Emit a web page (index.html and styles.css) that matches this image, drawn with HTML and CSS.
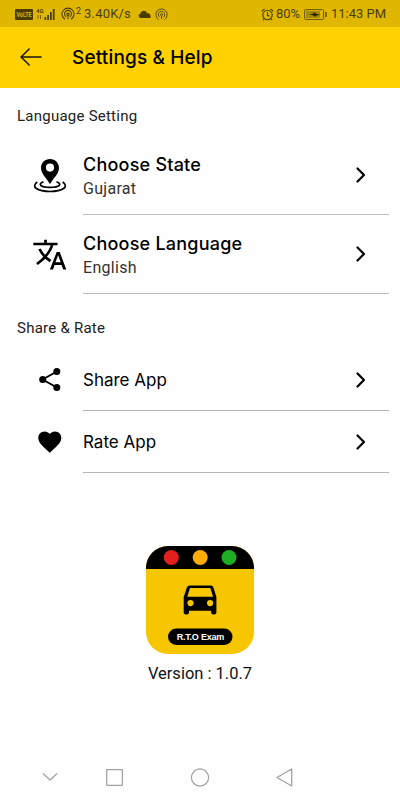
FILE: index.html
```html
<!DOCTYPE html>
<html lang="en">
<head>
<meta charset="utf-8">
<title>Settings &amp; Help</title>
<link rel="stylesheet" href="styles.css">
</head>
<body>
<div class="screen">
  <div class="status">
    <svg class="volte" width="18" height="15" viewBox="0 -2 18 15"><rect width="18" height="11" rx="1" fill="#4b3d00"/><text x="1.500" y="8.200" font-size="7" font-weight="700" fill="#dfb700" textLength="15" lengthAdjust="spacingAndGlyphs">VoLTE</text></svg>
    <svg class="signal" width="20" height="14" viewBox="0 0 20 14"><g fill="#4b3d00"><path d="M8.500 10h1.700v3H8.500zM11.200 8h1.700v5h-1.700zM14 5h1.700v8H14zM16.800 2h1.800v11h-1.800z"/><path d="M2 8v4M4.500 8v4" stroke="#4b3d00" stroke-width=".7"/></g><text x="0" y="5.500" font-size="6" font-weight="700" fill="#4b3d00">4G</text></svg>
    <svg class="hotspot" width="15" height="14" viewBox="0 0 15 14" fill="none" stroke="#4b3d00" stroke-width="1.100"><path d="M4 12.300a6 6 0 1 1 6 0M5 9.700a3.500 3.500 0 1 1 4 0"/><circle cx="7" cy="7.200" r="1.200"/><path d="M7 8v4"/></svg>
    <span class="sup">2</span>
    <span class="speed">3.40K/s</span>
    <svg class="cloud" width="13" height="8" viewBox="0 0 13 8"><path d="M2.500 8a2.300 2.300 0 0 1 0-4.500C3.500.2 7.500-.5 9 3.200 12 2.800 13 5 12.500 8z" fill="#4b3d00"/></svg>
    <svg class="cast" width="13" height="13" viewBox="0 0 13 13" fill="none" stroke="#4b3d00" stroke-width=".9"><path d="M3.500 11.500a5.700 5.700 0 1 1 6 0M4.600 9.100a3.200 3.200 0 1 1 3.800 0"/><circle cx="6.500" cy="6.600" r="1"/><path d="M6.500 8v3"/></svg>
    <svg class="alarm" width="13" height="13" viewBox="0 0 13 13" fill="none" stroke="#4b3d00" stroke-width="1.100"><circle cx="6.500" cy="7" r="4.700"/><path d="M6.500 4v3.300l2 1M.7 3.300 3.500.9M12.300 3.300 9.500.9M3 10.800l-1 1.400M10 10.800l1 1.400"/></svg>
    <span class="percent">80%</span>
    <svg class="battery" width="24" height="11" viewBox="0 0 24 11"><rect x=".6" y=".6" width="19" height="9.800" rx="1" fill="none" stroke="#6a5600"/><path d="M2 2h14v7H2z" fill="#a98b00"/><path d="M5 5.500 9.500 4.500 9 3l5.500 2.500H17L11.500 7 12 8.200 8 6z" fill="#332900"/><path d="M22 3v5" stroke="#4b3d00" stroke-width="1.300"/></svg>
    <span class="clock">11:43 PM</span>
  </div>
  <header class="appbar">
    <svg width="22" height="18" viewBox="0 0 22 18" fill="none" stroke="#1a1500" stroke-width="1.500" stroke-linecap="round" stroke-linejoin="round"><path d="M9.200 1 1 9l8.200 8M1 9h20"/></svg>
    <h1>Settings &amp; Help</h1>
  </header>
  <main>
    <h2 class="label lang">Language Setting</h2>
    <section class="row tall">
      <svg class="icon" width="34" height="34" viewBox="0 0 34 34"><path fill-rule="evenodd" d="M17 0c-5.200 0-9 3.900-9 8.900C8 14.500 13.500 19 17 25c3.500-6 9-10.500 9-16.100C26 3.900 22.200 0 17 0zm0 4.500a4.100 4.100 0 1 1 0 8.200 4.100 4.100 0 0 1 0-8.200z"/><path d="M10.500 22.700c-6 2.300-3.500 5.700 6.500 5.700s12.500-3.400 6.500-5.700M4.300 23C-2.500 27.800 4.500 32.500 17 32.500S36.500 27.800 29.700 23" fill="none" stroke="#000" stroke-width="1.700"/></svg>
      <div class="text"><h3>Choose State</h3><p>Gujarat</p></div>
      <svg class="chev" width="10" height="16" viewBox="0 0 10 16"><path d="m1.500 1.500 6.500 6.500-6.500 6.500"/></svg>
    </section>
    <section class="row tall">
      <svg class="icon" width="34" height="34" viewBox="0 0 34 34"><path d="M.3 6h24.200M12.500 1.700V6M19.500 6C17 15 11 21 4 26M6.500 11c3 6 6 9 11 12" fill="none" stroke="#000" stroke-width="2.700"/><path fill-rule="evenodd" d="M23.700 14h3L33.300 31.500h-3.100l-1.600-4.500h-7l-1.600 4.500h-3.100zM22.500 24.300h5.200l-2.600-7z"/></svg>
      <div class="text"><h3>Choose Language</h3><p>English</p></div>
      <svg class="chev" width="10" height="16" viewBox="0 0 10 16"><path d="m1.500 1.500 6.500 6.500-6.500 6.500"/></svg>
    </section>
    <h2 class="label second">Share &amp; Rate</h2>
    <section class="row">
      <svg class="icon" width="34" height="34" viewBox="0 0 34 34"><path d="M24 8.500 9.500 16.500 24 24.500" fill="none" stroke="#000" stroke-width="1.900"/><circle cx="23.800" cy="8.500" r="3.500"/><circle cx="9.700" cy="16.500" r="3.500"/><circle cx="23.800" cy="24.500" r="3.500"/></svg>
      <div class="text"><h4>Share App</h4></div>
      <svg class="chev" width="10" height="16" viewBox="0 0 10 16"><path d="m1.500 1.500 6.500 6.500-6.500 6.500"/></svg>
    </section>
    <section class="row">
      <svg class="icon" width="34" height="34" viewBox="0 0 34 34"><g transform="translate(3 3.100) scale(1.150)"><path d="m12 21.350-1.450-1.320C5.400 15.360 2 12.280 2 8.500 2 5.420 4.420 3 7.500 3c1.740 0 3.410.81 4.500 2.090C13.090 3.810 14.760 3 16.500 3 19.580 3 22 5.420 22 8.500c0 3.780-3.400 6.860-8.550 11.540z"/></g></svg>
      <div class="text"><h4>Rate App</h4></div>
      <svg class="chev" width="10" height="16" viewBox="0 0 10 16"><path d="m1.500 1.500 6.500 6.500-6.500 6.500"/></svg>
    </section>
    <div class="about">
      <svg width="108" height="108" viewBox="0 0 108 108"><defs><clipPath id="tile"><rect width="108" height="108" rx="22"/></clipPath></defs><g clip-path="url(#tile)"><path d="M0 0h108v108H0z" fill="#f6c600"/><path d="M0 0h108v23H0z"/></g><circle cx="25.300" cy="11.500" r="7.500" fill="#e3201b"/><circle cx="54.200" cy="11.500" r="7.500" fill="#ffac0a"/><circle cx="83" cy="11.500" r="7.500" fill="#1eae24"/><path fill-rule="evenodd" d="M43.500 39.500h21.300q1.900 0 2.600 1.900l3 9.600v15.600q0 1.800-1.800 1.800h-1.700q-1.800 0-1.800-1.800v-1.900H43v1.900q0 1.800-1.800 1.800h-1.700q-1.800 0-1.800-1.800V51l3.200-9.600q.7-1.900 2.600-1.900zm.5 2.500-2.700 8.700h25.800L64.300 42zM44.500 54a3.100 3.100 0 1 0 0 6.200 3.100 3.100 0 0 0 0-6.200zm19.600 0a3.100 3.100 0 1 0 0 6.200 3.100 3.100 0 0 0 0-6.200z"/><rect x="22" y="82.500" width="64.500" height="16.500" rx="8.250"/><text x="54.500" y="93.800" text-anchor="middle" font-family="Liberation Sans, sans-serif" font-size="9" font-weight="700" fill="#fff" textLength="47.500">R.T.O Exam</text></svg>
      <p class="version">Version : 1.0.7</p>
    </div>
  </main>
  <nav class="navbar">
    <svg width="400" height="26" viewBox="0 0 400 26" fill="none" stroke="#a3a3a3" stroke-width="1.300" stroke-linejoin="round"><path d="m43 9.500 7 6.500 7-6.500M106.700 5.700h15.700v15.600h-15.700zM291.700 5v17L277 13.500z"/><circle cx="200" cy="13.500" r="8.600"/></svg>
  </nav>
</div>
</body>
</html>
```
FILE: styles.css
```css
* { box-sizing: border-box; }
body, h1, h2, h3, h4, p { margin: 0; font-weight: 400; }
body { font-family: Roboto, sans-serif; color: #000; background: #fefefe; }
svg { display: block; flex: none; overflow: visible; }
.screen { width: 400px; height: 800px; display: flex; flex-direction: column; overflow: hidden; }
.status { height: 27px; padding: 1px 0 0 15px; display: flex; align-items: center; background: #dfb700; color: #4b3d00; font-size: 13px; line-height: 16px; white-space: nowrap; }
.signal { margin-left: 3px; }
.hotspot { margin-left: 5px; }
.sup { width: 5px; font-size: 9px; margin-top: -7px; }
.speed { width: 47px; margin-left: 3px; letter-spacing: .2px; }
.cloud { margin-left: 7px; }
.cast { margin-left: 4px; }
.alarm { margin-left: 93px; }
.percent { width: 25px; margin-left: 2px; }
.battery { margin-left: 3px; }
.clock { margin-left: 3px; }
.appbar { height: 61px; padding-left: 20px; display: flex; align-items: center; gap: 30px; background: #ffd100; }
.appbar svg { margin-top: -1px; }
.appbar h1 { font: 500 19px/24px Inter, sans-serif; letter-spacing: .15px; }
main { flex: 1; }
.label { padding-left: 17px; font-size: 15px; line-height: 20px; letter-spacing: .24px; color: #222; }
.lang { padding-top: 18px; height: 48px; }
.second { padding-top: 24px; height: 55px; }
.row { height: 62px; display: flex; align-items: center; padding: 0 11px 0 33px; background: linear-gradient(#b5b5b5, #b5b5b5) 83px 100% / 306px 1px no-repeat; }
.row.tall { height: 79px; background-image: linear-gradient(#bebebe, #bebebe); }
.text { flex: 1; margin-left: 16px; white-space: nowrap; }
.row.tall .text { margin-top: 1px; }
h3 { font: 500 18px/24px Inter, sans-serif; letter-spacing: .22px; }
.text p { font-size: 16px; line-height: 23px; letter-spacing: .3px; color: #333; }
h4 { font: 400 17px/24px Inter, sans-serif; }
.chev { margin: -1px 23px 0 0; fill: none; stroke: #000; stroke-width: 2.2; stroke-linecap: round; stroke-linejoin: round; }
.about { margin-top: 73px; display: flex; flex-direction: column; align-items: center; }
.version { margin-top: 9px; font-size: 16.5px; line-height: 22px; color: #111; }
.navbar { height: 36px; }
```
